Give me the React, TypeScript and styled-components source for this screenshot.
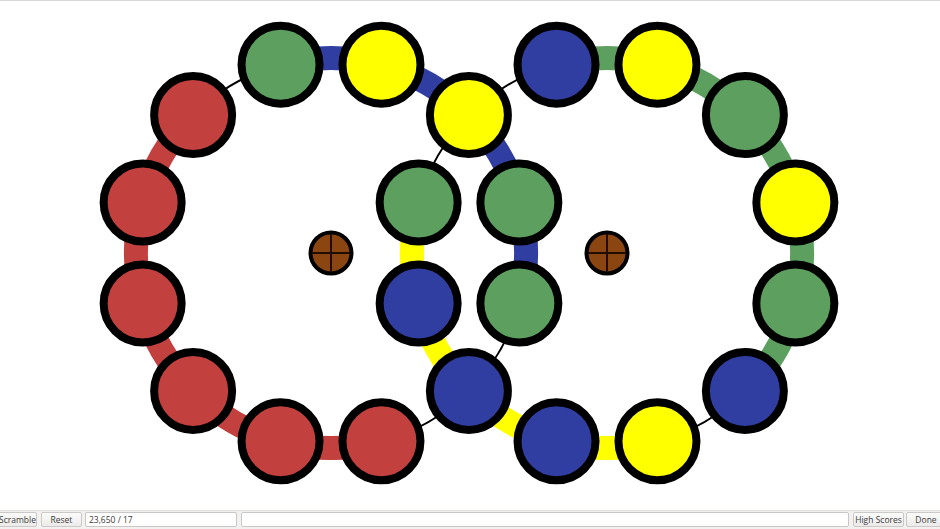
import React from "react";
import styled, { createGlobalStyle } from "styled-components";

const GlobalStyle = createGlobalStyle`
  html, body {
    margin: 0;
    padding: 0;
    background: #ffffff;
    overflow: hidden;
  }
  body {
    font-family: "Open Sans", "DejaVu Sans", sans-serif;
  }
`;

const Page = styled.div`
  width: 940px;
  height: 529px;
  display: flex;
  flex-direction: column;
  overflow: hidden;
`;

const Board = styled.div`
  flex: 1 1 auto;
  border-top: 1px solid #d6d6d6;
  background: #ffffff;
  display: flex;
`;

const Toolbar = styled.div`
  flex: 0 0 19px;
  display: flex;
  align-items: center;
  gap: 4px;
  margin-right: -6px;
  padding: 0 0 1px 0;
  background: #f2f1f0;
  border-top: 1px solid #e2e1e0;
  box-sizing: border-box;
`;

const Button = styled.button<{ $width: number; $offset?: number }>`
  flex: 0 0 ${(p) => p.$width}px;
  height: 15px;
  margin-left: ${(p) => p.$offset ?? 0}px;
  padding: 0;
  border: 1px solid #cbcac8;
  border-radius: 2px;
  background: linear-gradient(#fbfbfa, #ecebea);
  color: #3c3c3c;
  font-family: "Open Sans", "DejaVu Sans", sans-serif;
  font-size: 8.5px;
  line-height: 13px;
  text-align: center;
  white-space: nowrap;
  overflow: visible;
`;

const Field = styled.div<{ $grow?: boolean; $width?: number; $offset?: number }>`
  flex: ${(p) => (p.$grow ? "1 1 auto" : `0 0 ${p.$width}px`)};
  height: 15px;
  margin-left: ${(p) => p.$offset ?? 0}px;
  box-sizing: border-box;
  padding: 0 3px;
  border: 1px solid #c8c7c5;
  border-radius: 2px;
  background: #ffffff;
  color: #3c3c3c;
  font-size: 8.5px;
  line-height: 13px;
  white-space: nowrap;
`;

const COLORS: Record<string, string> = {
  r: "#c2403e",
  g: "#5d9f5f",
  b: "#2f3ea0",
  y: "#ffff00",
};

const R = 195;
const LEFT = { x: 331, y: 253 };
const RIGHT = { x: 607, y: 253 };

const angleOf = (i: number) => ((-165 + 30 * i) * Math.PI) / 180;

const pt = (c: { x: number; y: number }, i: number) => ({
  x: c.x + R * Math.cos(angleOf(i)),
  y: c.y + R * Math.sin(angleOf(i)),
});

// ball colours per ring, index 0 at -165deg, clockwise
const leftBalls = ["r", "r", "g", "y", "y", "g", "g", "b", "r", "r", "r", "r"];
const rightBalls = ["g", "y", "b", "y", "g", "y", "g", "b", "y", "b", "b", "b"];

// link i joins ball i and i+1; "" = thin black line
const leftLinks = ["r", "", "b", "b", "b", "b", "", "", "r", "r", "r", "r"];
const rightLinks = ["", "", "g", "g", "g", "g", "g", "", "y", "y", "y", "y"];

const arcPath = (c: { x: number; y: number }, i: number) => {
  const a = pt(c, i);
  const b = pt(c, i + 1);
  return `M ${a.x} ${a.y} A ${R} ${R} 0 0 1 ${b.x} ${b.y}`;
};

const Links = ({ center, links }: { center: { x: number; y: number }; links: string[] }) => (
  <g fill="none">
    {links.map((l, i) => (
      <path
        key={i}
        d={arcPath(center, i)}
        stroke={l ? COLORS[l] : "#000"}
        strokeWidth={l ? 24 : 2}
      />
    ))}
  </g>
);

const Balls = ({
  center,
  balls,
  skip = [],
}: {
  center: { x: number; y: number };
  balls: string[];
  skip?: number[];
}) => (
  <g>
    {balls.map((b, i) => {
      if (skip.includes(i)) return null;
      const p = pt(center, i);
      return <circle key={i} cx={p.x} cy={p.y} r={39} fill={COLORS[b]} stroke="#000" strokeWidth={8} />;
    })}
  </g>
);

const Pivot = ({ x, y }: { x: number; y: number }) => (
  <g>
    <circle cx={x} cy={y} r={20.5} fill="#8a4510" stroke="#000" strokeWidth={4} />
    <line x1={x - 19} y1={y} x2={x + 19} y2={y} stroke="#1f0d00" strokeWidth={2} />
    <line x1={x} y1={y - 19} x2={x} y2={y + 19} stroke="#1f0d00" strokeWidth={2} />
  </g>
);

export default function App() {
  return (
    <>
      <GlobalStyle />
      <Page>
        <Board>
          <svg width={940} height={509} viewBox="0 1 940 509">
            <Links center={LEFT} links={leftLinks} />
            <Links center={RIGHT} links={rightLinks} />
            <Balls center={LEFT} balls={leftBalls} />
            <Balls center={RIGHT} balls={rightBalls} skip={[1, 10]} />
            <Pivot x={LEFT.x} y={LEFT.y} />
            <Pivot x={RIGHT.x} y={RIGHT.y} />
          </svg>
        </Board>
        <Toolbar>
          <Button $width={38} $offset={-2}>Scramble</Button>
          <Button $width={41}>Reset</Button>
          <Field $width={152} $offset={-1}>23,650 / 17</Field>
          <Field $grow />
          <Button $width={51}>High Scores</Button>
          <Button $width={40} $offset={-2}>Done</Button>
        </Toolbar>
      </Page>
    </>
  );
}
